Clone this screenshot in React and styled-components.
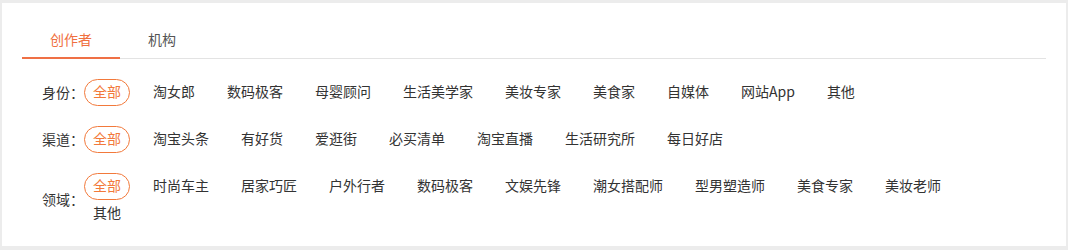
import React, { useState } from "react";
import styled, { createGlobalStyle } from "styled-components";

const GlobalStyle = createGlobalStyle`
  html, body { margin: 0; padding: 0; background: #ececec; }
  body {
    font-family: "PingFang SC", "Noto Sans CJK SC", "Noto Sans", sans-serif;
    color: #333;
  }
`;

const Page = styled.div`
  padding: 3px 2px 4px;
`;

const Card = styled.div`
  background: #fff;
  padding: 20px 20px 19px;
  min-height: 204px;
  box-sizing: border-box;
`;

const TabBar = styled.div`
  display: flex;
  border-bottom: 1px solid #e3e3e3;
`;

const Tab = styled.div`
  position: relative;
  height: 35px;
  line-height: 33px;
  padding: 0 28px 2px;
  box-sizing: border-box;
  font-size: 14px;
  color: ${(p) => (p.$active ? "#f0703f" : "#555")};
  cursor: pointer;
  &::after {
    content: "";
    display: ${(p) => (p.$active ? "block" : "none")};
    position: absolute;
    left: 0;
    right: 0;
    bottom: -1px;
    height: 2px;
    background: #ef7045;
  }
`;

const Filters = styled.div`
  display: flex;
  flex-direction: column;
  gap: 20px;
  margin-top: 20px;
`;

const Row = styled.div`
  display: flex;
  align-items: center;
  padding-left: 20px;
`;

const Label = styled.div`
  width: 42px;
  flex-shrink: 0;
  padding-bottom: 2px;
  font-size: 14px;
  color: #333;
  white-space: nowrap;
`;

const List = styled.div`
  display: flex;
  flex-wrap: wrap;
  column-gap: 14px;
  max-width: 900px;
`;

const Item = styled.div`
  box-sizing: border-box;
  height: 27px;
  line-height: 23px;
  padding: 0 8px 2px;
  font-size: 14px;
  border: 1px solid ${(p) => (p.$active ? "#f2793b" : "transparent")};
  border-radius: 14px;
  color: ${(p) => (p.$active ? "#f2793b" : "#333")};
  white-space: nowrap;
  cursor: pointer;
`;

const groups = [
  {
    label: "身份：",
    items: ["全部", "淘女郎", "数码极客", "母婴顾问", "生活美学家", "美妆专家", "美食家", "自媒体", "网站App", "其他"],
  },
  {
    label: "渠道：",
    items: ["全部", "淘宝头条", "有好货", "爱逛街", "必买清单", "淘宝直播", "生活研究所", "每日好店"],
  },
  {
    label: "领域：",
    items: ["全部", "时尚车主", "居家巧匠", "户外行者", "数码极客", "文娱先锋", "潮女搭配师", "型男塑造师", "美食专家", "美妆老师", "其他"],
  },
];

export default function App() {
  const [tab, setTab] = useState(0);
  return (
    <Page>
      <GlobalStyle />
      <Card>
        <TabBar>
          {["创作者", "机构"].map((t, i) => (
            <Tab key={t} $active={tab === i} onClick={() => setTab(i)}>
              {t}
            </Tab>
          ))}
        </TabBar>
        <Filters>
          {groups.map((g) => (
            <Row key={g.label}>
              <Label>{g.label}</Label>
              <List>
                {g.items.map((it, i) => (
                  <Item key={it + i} $active={i === 0}>
                    {it}
                  </Item>
                ))}
              </List>
            </Row>
          ))}
        </Filters>
      </Card>
    </Page>
  );
}
